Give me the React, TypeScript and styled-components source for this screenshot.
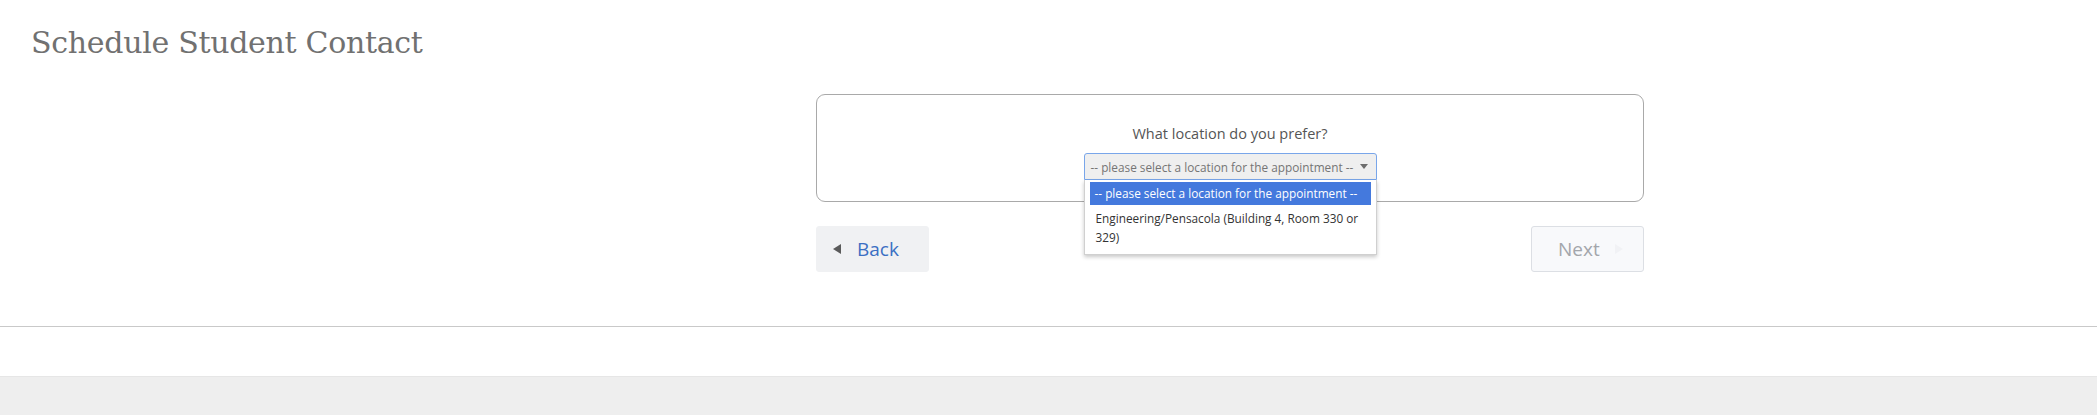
import React from "react";
import styled, { createGlobalStyle } from "styled-components";

const Global = createGlobalStyle`
  html, body { margin: 0; padding: 0; background: #ffffff; }
  body { font-family: "Open Sans", "Liberation Sans", sans-serif; }
  * { box-sizing: border-box; }
`;

const Page = styled.div`
  min-height: 415px;
  display: flex;
  flex-direction: column;
`;

const Header = styled.header`
  padding: 25px 0 0 31px;
`;

const Title = styled.h1`
  margin: 0;
  font-family: "DejaVu Serif", "Liberation Serif", serif;
  font-weight: 400;
  font-size: 30px;
  line-height: 36px;
  letter-spacing: -0.3px;
  color: #717171;
`;

const Main = styled.main`
  display: grid;
  grid-template-columns: 816px 828px 1fr;
  margin-top: 33px;
`;

const Column = styled.div`
  grid-column: 2;
  display: flex;
  flex-direction: column;
`;

const Card = styled.section`
  border: 1px solid #a9a9a9;
  border-radius: 9px;
  padding: 29px 20px 21px;
  height: 108px;
  display: flex;
  flex-direction: column;
  align-items: center;
  gap: 9px;
`;

const Question = styled.label`
  font-size: 14.5px;
  line-height: 20px;
  color: #555555;
`;

const SelectWrap = styled.div`
  position: relative;
  width: 293px;
`;

const SelectBox = styled.div`
  height: 27px;
  border: 1px solid #79a6ea;
  border-radius: 3px 3px 0 0;
  background: #efefef;
  display: flex;
  align-items: center;
  justify-content: space-between;
  padding: 0 8px 0 6px;
  font-size: 11.8px;
  color: #757575;
  white-space: nowrap;
`;

const Caret = styled.span`
  width: 0;
  height: 0;
  border-left: 4px solid transparent;
  border-right: 4px solid transparent;
  border-top: 5px solid #6d6d6d;
`;

const Dropdown = styled.ul`
  position: absolute;
  top: 27px;
  left: 0;
  width: 100%;
  margin: 0;
  padding: 2px 5px 7px;
  list-style: none;
  background: #ffffff;
  border: 1px solid #d0d0d0;
  border-top: none;
  box-shadow: 0 2px 4px rgba(0, 0, 0, 0.22);
  z-index: 2;
`;

const Option = styled.li<{ $active?: boolean }>`
  font-size: 11.8px;
  line-height: 19px;
  padding: ${(p) => (p.$active ? "2px 5px 2px" : "4px 6px 0")};
  background: ${(p) => (p.$active ? "#4479dd" : "transparent")};
  color: ${(p) => (p.$active ? "#ffffff" : "#333333")};
`;

const ButtonRow = styled.div`
  display: flex;
  justify-content: space-between;
  margin-top: 24px;
`;

const NavButton = styled.button<{ $disabled?: boolean }>`
  height: 46px;
  display: flex;
  align-items: center;
  gap: 16px;
  border-radius: 3px;
  font-family: "Open Sans", "Liberation Sans", sans-serif;
  font-size: 19px;
  cursor: pointer;
  border: 1px solid ${(p) => (p.$disabled ? "#dcdfe4" : "#f0f1f3")};
  background: ${(p) => (p.$disabled ? "#f8f9fb" : "#f0f1f3")};
  color: ${(p) => (p.$disabled ? "#a3a6ab" : "#3b6fc3")};
`;

const BackButton = styled(NavButton)`
  width: 113px;
  padding: 0 0 0 16px;
`;

const NextButton = styled(NavButton)`
  width: 113px;
  padding: 0 0 0 26px;
  gap: 15px;
`;

const TriLeft = styled.span`
  width: 0;
  height: 0;
  border-top: 5px solid transparent;
  border-bottom: 5px solid transparent;
  border-right: 8px solid #5a5a5a;
`;

const TriRight = styled.span`
  width: 0;
  height: 0;
  border-top: 5px solid transparent;
  border-bottom: 5px solid transparent;
  border-left: 8px solid #f1f2f5;
`;

const Divider = styled.hr`
  margin: 54px 0 0;
  border: none;
  border-top: 1px solid #c9c9c9;
`;

const Footer = styled.footer`
  margin-top: 49px;
  flex: 1;
  min-height: 38px;
  background: #eeeeee;
  border-top: 1px solid #e6e6e6;
`;

export default function App() {
  return (
    <Page>
      <Global />
      <Header>
        <Title>Schedule Student Contact</Title>
      </Header>
      <Main>
        <Column>
          <Card>
            <Question>What location do you prefer?</Question>
            <SelectWrap>
              <SelectBox>
                <span>-- please select a location for the appointment --</span>
                <Caret />
              </SelectBox>
              <Dropdown>
                <Option $active>-- please select a location for the appointment --</Option>
                <Option>Engineering/Pensacola (Building 4, Room 330 or 329)</Option>
              </Dropdown>
            </SelectWrap>
          </Card>
          <ButtonRow>
            <BackButton>
              <TriLeft />
              <span>Back</span>
            </BackButton>
            <NextButton $disabled>
              <span>Next</span>
              <TriRight />
            </NextButton>
          </ButtonRow>
        </Column>
      </Main>
      <Divider />
      <Footer />
    </Page>
  );
}
